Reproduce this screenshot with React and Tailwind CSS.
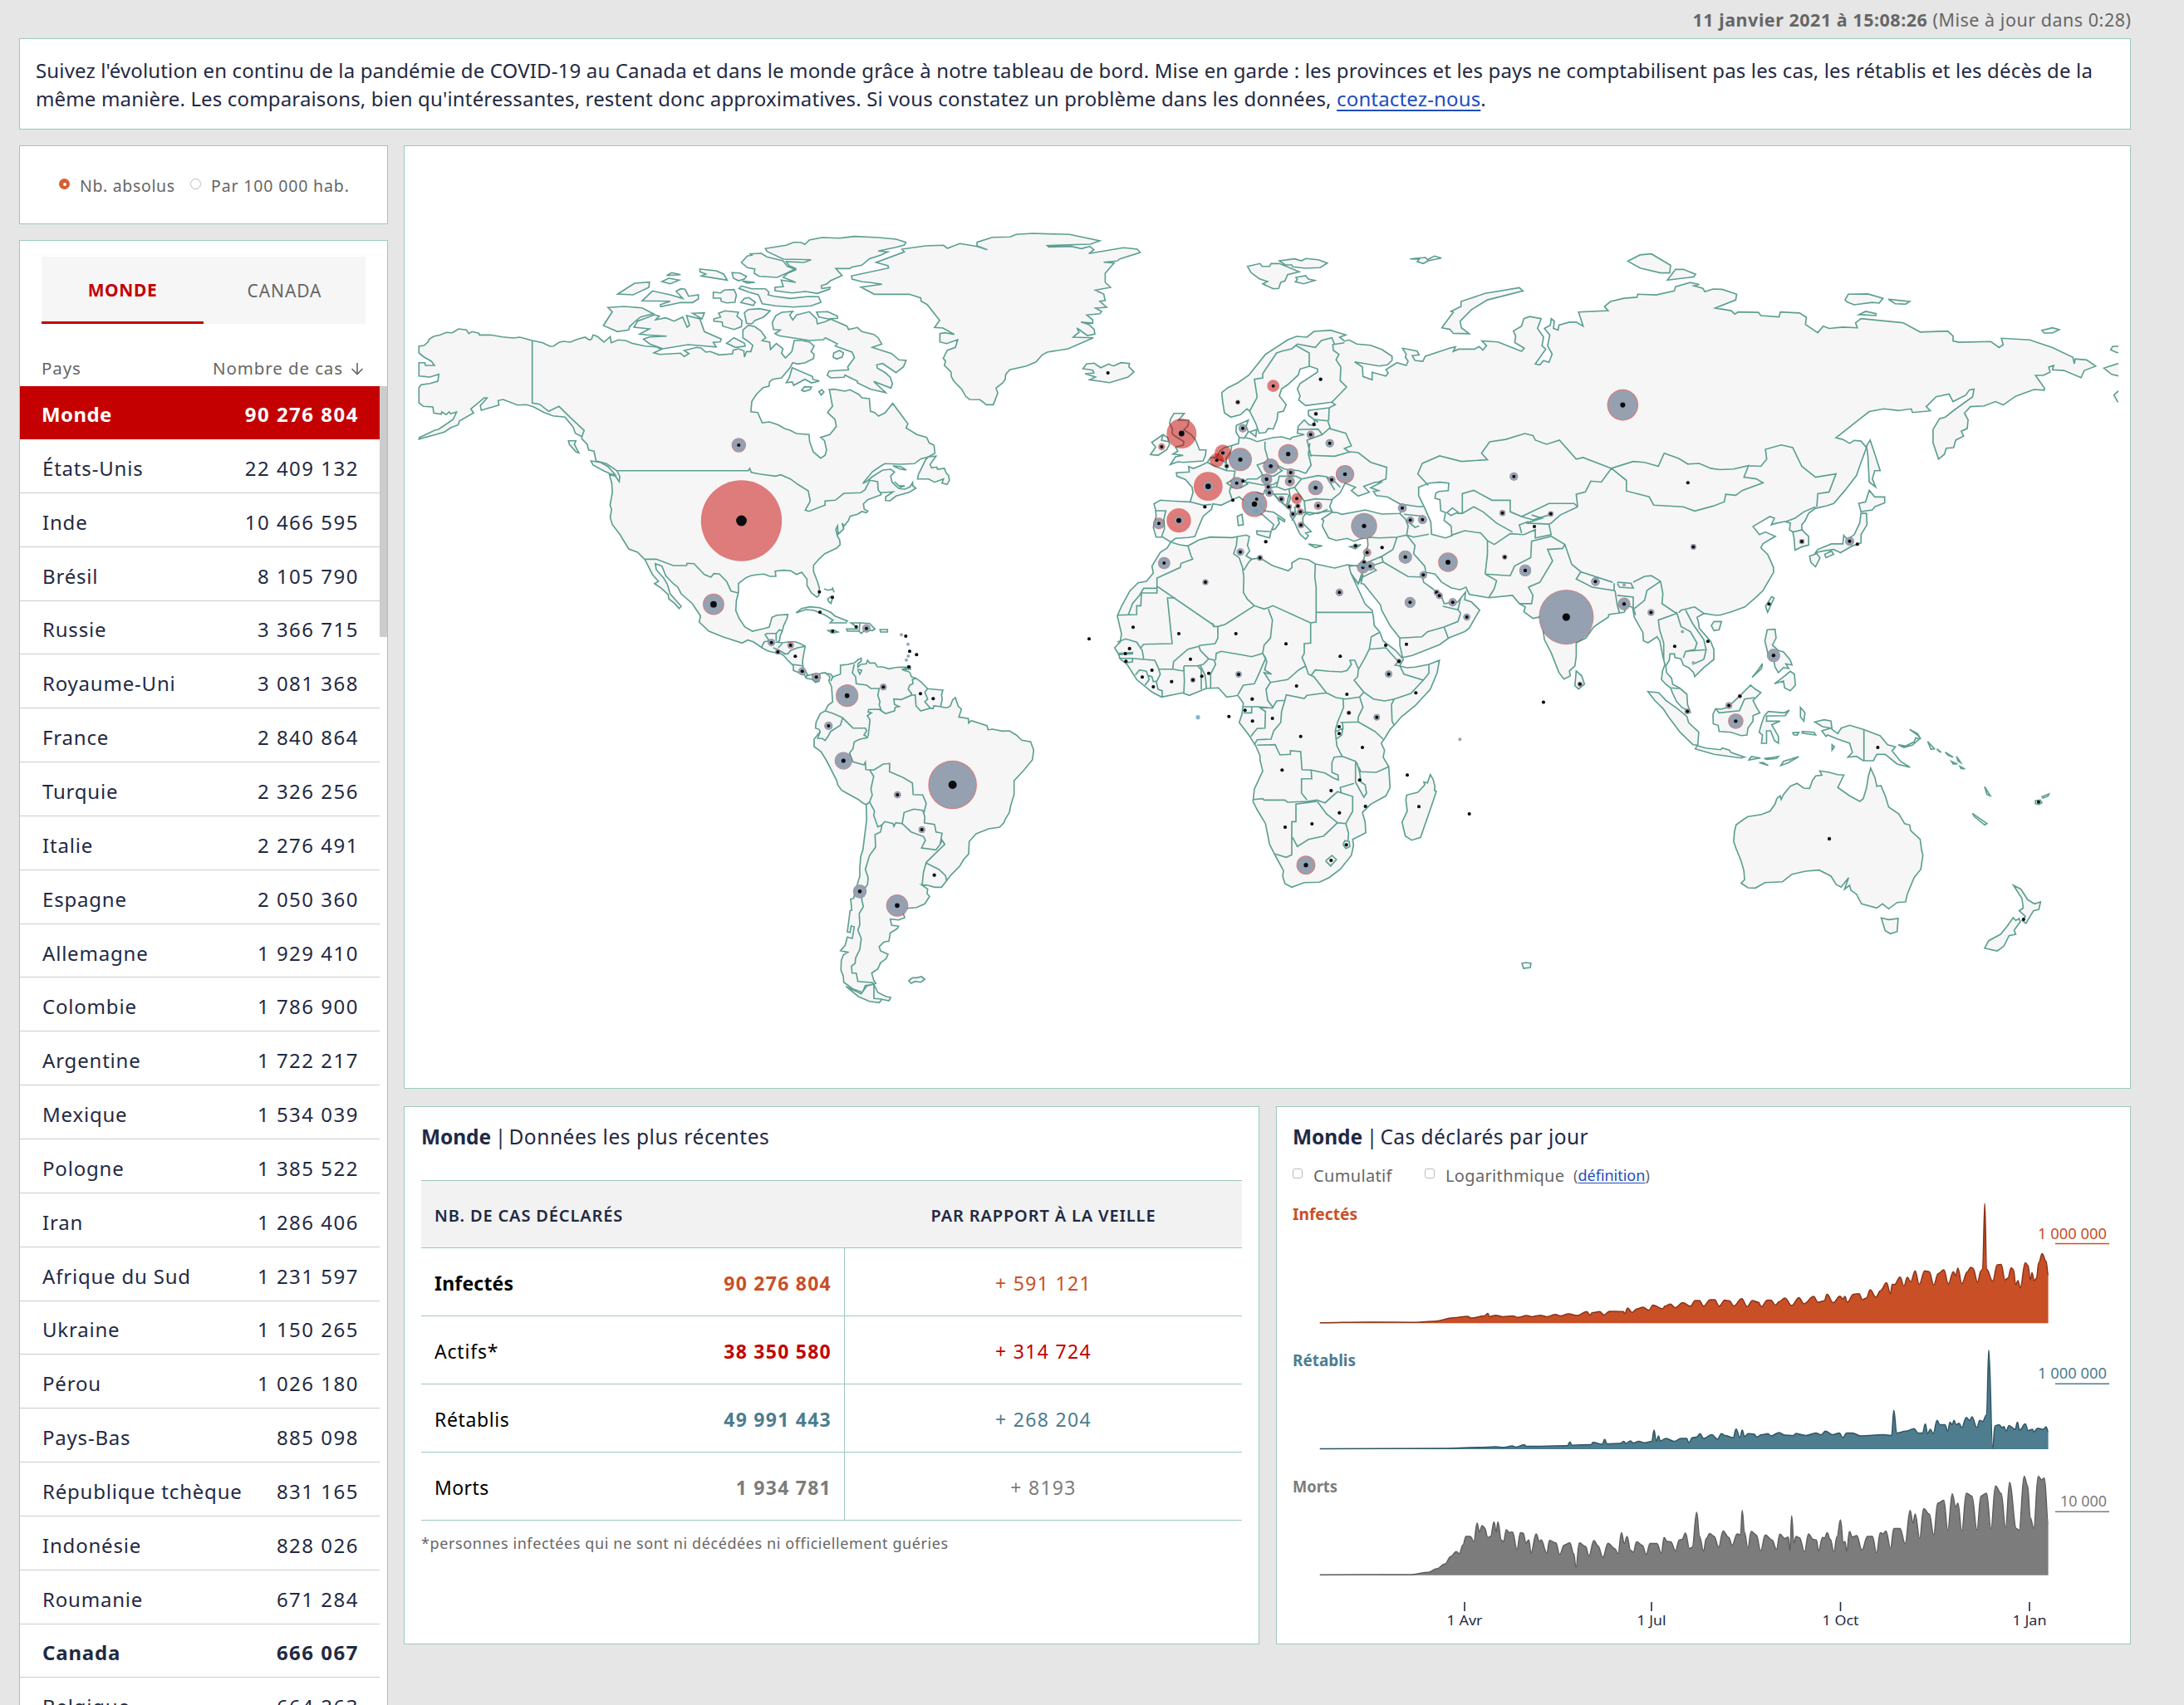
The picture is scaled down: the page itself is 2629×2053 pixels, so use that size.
import React from "react";

// Map geometry is stored in regional grids: [origin x, origin y, units per px in x, units per px in y].
const GRIDS = {
  n: [480, 260, 2.8, 3],
  g: [900, 260, 2.8, 3],
  e: [1320, 380, 3, 3],
  a: [1700, 280, 1.8233, 2.529],
  s: [900, 720, 3, 3],
  f: [1320, 640, 3, 3],
  o: [1900, 700, 2.45, 3],
  v: [1480, 290, 3, 3],
  c: [820, 700, 3, 3],
  p: [0, 0, 1, 1],
};

function project(grid, x, y) {
  const [ox, oy, sx, sy] = GRIDS[grid];
  return [ox + x / sx, oy + y / sy];
}

function toPath(source, close) {
  return source
    .split("|")
    .map((shape) => {
      let grid = "p";
      const out = [];
      shape
        .trim()
        .split(/\s+/)
        .forEach((token) => {
          if (token.length === 1) {
            grid = token;
            return;
          }
          const [x, y] = token.split(",").map(Number);
          const [px, py] = project(grid, x, y);
          out.push(px.toFixed(1) + "," + py.toFixed(1));
        });
      return "M" + out.join("L") + (close ? "Z" : "");
    })
    .join("");
}

const MAINLANDS = `
n 68,470 85,468 98,456 103,445 118,435 140,430 160,421 180,422 202,408 228,412 236,425 247,418 270,424 272,430 310,430 350,437 385,441 408,438 450,450 485,458 510,471 522,470 540,457 555,453 578,456 600,446 628,438 642,448 650,445 655,430 670,436 692,456 713,436 716,458 740,448 765,450 785,460 830,470 870,473 885,482 860,494 880,500 950,496 962,508 978,497 962,486 1005,475 1020,478 1035,492 1050,490 1080,502 1125,498 1127,485 1145,480 1163,487 1165,510 1172,490 1187,490 1193,467 1180,455 1160,440 1160,412 1178,395 1200,400 1220,415 1237,440 1225,450 1250,456 1253,482 1273,461 1295,480 1290,495 1303,513 1325,490 1333,450 1360,450 1385,456 1400,470 1390,490 1400,500 1398,515 1370,530 1345,535 1328,530 1318,550 1290,585 1260,590 1250,600 1248,615 1228,620 1205,645 1190,670 1187,707 1210,710 1225,747 1250,744 1280,755 1300,768 1320,775 1340,786 1383,790 1385,815 1397,852 1422,875 1437,865 1442,845 1435,812 1422,800 1453,790 1475,760 1470,735 1445,710 1462,688 1452,630
g 275,628 290,626 328,633 345,628 375,645 385,657 410,660 414,706 428,710 441,723 463,711 489,677 540,751 534,766 570,790 603,800 612,820 628,828 631,857 610,870 583,878 562,895 515,897 462,895 440,910 420,925 388,966 400,960 420,942 455,918 482,915 495,925 482,940 487,962 510,985 530,987 548,978 556,963 557,975 567,984 545,998 500,1012 480,1029 465,1028 465,1015 490,997 450,1000 450,1007 405,1025 390,1040 393,1060 405,1066 400,1072 385,1068 370,1078 345,1085 340,1100 325,1120 318,1110 324,1130 305,1150 303,1120 297,1132 303,1158 310,1170 312,1187 300,1200 260,1220 240,1240 222,1262 222,1285 235,1320 242,1345 240,1372 233,1377 215,1362 200,1335 200,1312 182,1287 165,1295 145,1282 120,1280 93,1283 95,1302 75,1302 55,1294 30,1296 10,1300
n 1170,1307 1145,1328 1145,1360 1138,1390
c 197,105 210,135 230,165 257,180 300,170 318,165 328,130 345,122 385,120 382,135 370,160 365,180 358,195 355,215 345,220 365,222 390,218 412,218 430,225 448,235 442,265 438,290 440,310 458,340 478,335 490,340 510,330 540,335 548,345 575,335
s 335,243 362,240 385,235 400,222 410,218 410,228 398,238 398,250 408,240 428,238 433,225 440,235 460,235 468,248 490,250 510,256 530,252 550,250 580,250 562,260 585,268 592,285 608,290 628,305 650,328 680,331 705,333 700,350 703,365 697,392 710,396 722,396 732,390 740,368 750,360 760,390 772,402 763,430 797,436 798,452 808,443 865,462 868,476 885,474 920,481 945,480 970,495 990,514 1022,520 1033,550 1028,585 995,625 962,660 962,710 950,750 945,775 930,800 925,812 910,828 870,834 825,852 800,880 798,925 780,945 765,970 735,1000 718,1022 700,1045 675,1045 650,1038 628,1036 650,1052 648,1068 657,1078 640,1105 610,1118 565,1122 562,1140 567,1155 545,1163 515,1160 520,1182 545,1186 540,1195 515,1210 510,1240 492,1243 475,1260 480,1275 507,1287 500,1303 480,1318 470,1340 448,1355 455,1380 463,1393 440,1398 425,1400 415,1425 380,1412 347,1388 345,1365 337,1345 338,1310 345,1290 362,1280 335,1274 352,1255 360,1225 378,1230 385,1188 374,1185 370,1208 360,1206 370,1130 376,1128 372,1088 383,1085 388,1062 405,1005 405,975 408,935 416,910 430,800 428,747 412,738 400,728 340,695 325,675 322,660 285,588 265,555 240,537 240,510 262,483 258,475 245,470 247,450 262,418 280,408 290,388 307,375 305,350 303,320 293,300 297,285 280,270 262,273 250,285 258,300 245,305 235,295 212,290 205,278 185,270 165,262 165,245 145,225 130,208 118,200 85,195 70,190 52,180 20,158 0,152
c 240,212 220,223 150,200 100,180 65,147 70,125 40,80 0,45
n 940,1340 925,1328 900,1300 887,1265 865,1256 868,1278 893,1308 905,1330 915,1365 935,1390 952,1410 945,1418 930,1400 910,1383 908,1368 885,1345 862,1328 875,1320 855,1295 830,1242 805,1215 775,1203 745,1150 720,1115 713,1090 717,1060 712,1045 720,1000 718,965 710,935 730,940 743,960 745,940 735,920 700,895 665,885 658,850 640,845 635,825 617,805 617,797 595,785 588,763 560,727 520,722 490,710 455,690 430,682 400,683 352,663 335,667 338,683 278,702 275,685 298,658 288,657 243,697 252,712 205,740 200,755 175,765 155,780 125,790 68,806 70,800 120,775 135,770 170,745 183,735 195,708 175,715 170,708 160,718 145,708 143,716 118,712 115,690 83,688 68,675 68,620 75,610 105,605 132,597 135,572 105,582 68,578 68,530 88,530 90,540 120,540 110,525 85,510 68,495
| e 207,680 230,667 270,670 338,673 348,640 345,620 320,592 290,580 288,568 335,565 332,545 350,552 380,540 400,530 412,512 435,510 445,490 460,478 485,470 512,462 515,440 503,420 505,397 548,377 540,400 548,420 535,440 555,445 580,455 608,448 640,440 670,438 700,447 705,440 750,430 725,425 728,400 750,377 768,395 790,395 785,375 765,360 765,343 840,333 862,322 850,313 755,325 730,305 735,290 725,265 735,245 797,205 798,193 770,183 735,193 728,215 690,250 668,265 660,290 685,322 675,345 655,350 652,375 638,410 620,408 610,422 587,425 575,390 553,345 543,337 520,358 485,367 462,352 455,310 452,278 475,260 510,243 550,215 610,140 690,88 722,75 760,78 785,57 845,53 900,70 878,78 895,92 912,88 940,103 990,107 1030,122 1067,147 1067,162 1050,178 1020,182 932,167 960,185 962,220 995,232 995,205 1045,218 1053,208 1045,195 1085,170 1118,180 1125,165 1115,150 1118,140 1105,118 1158,128 1165,142 1140,145 1150,162 1178,165 1187,147 1277,117
a 95,348 90,362 102,355 137,355 147,347 155,358 163,345 153,330 188,333 240,362 246,352 225,335 227,315 222,300 240,285 245,262 258,256 283,262 275,292 288,318 285,345 293,355 270,400 280,403 288,390 300,395 307,370 297,345 302,312 290,292 303,282 305,262 312,270 310,292 320,297 322,282 345,273 360,273 375,285 365,242 430,238 422,225 435,210 465,200 493,197 495,188 535,190 575,178 578,165 610,152 630,158 618,162 638,170 642,180 660,172 680,173 712,188 710,205 665,230 700,238 708,248 715,242 760,243 765,253 805,257 808,242 850,245 865,258 863,280 890,305 902,285 915,292 945,288 977,290 973,275 985,262 1078,275 1115,303 1175,300 1187,315 1187,330 1200,334 1270,332 1288,350 1297,342 1293,322 1355,327 1405,350 1450,380 1453,400 1455,385 1480,388 1500,407 1475,420 1468,442 1430,420 1405,418 1408,405 1397,410 1400,425 1385,435 1368,435 1388,475 1387,480 1365,478 1325,498 1297,525 1280,515 1255,528 1225,530 1212,550 1220,570 1218,597 1205,605 1210,620 1193,632 1188,655 1172,657 1168,675 1155,690 1143,640 1143,600 1157,567 1170,562 1190,540 1230,500 1233,477 1223,479 1215,495 1187,515 1178,492 1150,500 1128,530 1137,543 1098,548 1095,537 1068,542 1035,537 1003,545 930,625 945,630 960,642 970,633 985,635 997,655 985,700 975,740 950,785 925,825 910,832 885,840 870,855 862,878 855,890 855,905 870,925 870,952 855,957 840,967 838,930 835,912 828,905 830,885 818,880 800,885 788,890 795,870 785,865 748,895 762,920 775,912 797,925 770,947 765,960 780,980 793,1020 793,1035 770,1090 755,1110 730,1140 700,1155 675,1165 665,1165 640,1160 625,1172 628,1185 630,1205 655,1245 662,1270 662,1300 640,1325 620,1352
o 340,330 325,312 310,303 302,280 285,275 283,262 270,262 268,285 258,305 260,330 275,350 278,372 298,385 320,408 322,445 330,472 305,455 290,435 278,405 272,385 258,372 245,355 248,325 255,300 248,265 240,215 232,200 205,222 192,215 190,185 165,130 160,95 145,85 135,112 118,115 90,120 88,130 65,148 45,165 22,205 0,218
a 360,1250 360,1290 357,1320 345,1335 347,1350 333,1360 322,1340 305,1280 290,1240 283,1170 265,1175 245,1155 248,1140 235,1130 220,1105 168,1112 125,1102 118,1080 105,1088 85,1082 65,1065 50,1040 33,1035 22,1045 25,1065 45,1085 65,1110 70,1130 100,1125 117,1095 115,1118 130,1125 148,1150 135,1180 125,1205 115,1215 80,1235 60,1255 0,1288
e 1105,1235 1095,1190 1095,1165 1060,1120 1030,1065 1025,1045 965,970 955,968 962,935 945,970 918,930 912,905 945,902 965,880 970,860 980,830 978,800 950,808 930,815 905,805 865,812 838,803 815,760 820,740 813,735 850,710 870,712 885,718 940,708 970,702 1030,717 1095,715 1110,695 1095,680 1050,655 1010,650 1000,635 1018,632 990,622 1032,600 1005,602 965,617 985,638 945,652 920,632 935,620 898,605 880,640 852,663 842,690 850,705 835,707 800,712 770,720 755,715 745,730 745,750 775,780 755,785 765,795 755,808 735,790 725,770 712,740 700,725 700,700 690,690 660,670 640,645 608,630 603,645 580,640 578,665 605,705 640,710 680,738 678,745 655,730 660,750 645,770 632,775 640,755 600,720 560,700 540,675 515,655 490,665 450,685 420,680 415,700 385,725 370,760 355,798 330,802 285,805 268,818 240,800 215,800 205,765 215,725 213,700
| f 268,38 300,48 330,52 370,30 410,20 490,22 510,18 540,13 552,18 545,50 553,70 540,88 560,100 590,95 635,123 692,142 706,130 705,113 732,97 765,102 790,117 860,132 905,120 945,125 962,140 945,188 918,150 970,262 995,285 1000,310 1003,340 1022,362 1035,395 1080,430 1108,462 1095,485 1120,492 1150,490 1200,480 1238,465 1230,510 1205,570 1150,630 1100,670 1075,700 1060,715 1045,740 1028,765 1040,790 1035,815 1055,850 1060,925 1045,955 990,985 960,1015 970,1050 972,1088 925,1112 928,1135 920,1170 880,1220 840,1250 805,1267 750,1268 705,1285 680,1272 672,1245 675,1225 645,1170 625,1130 610,1055 580,1005 565,975 570,930 600,865 590,825 590,810 575,775 550,735 515,690 525,660 530,620 510,592 495,595 470,598 440,565 395,567 335,592 310,583 235,598 200,580 145,535 110,480 85,460 78,440 65,420 85,400 90,370 75,305 90,270 120,215 150,185 180,180 205,150 200,125 230,75 255,60
`;

const ISLANDS = `
n 648,885 680,890 705,905 730,935 715,932 690,920 655,900 | n 572,812 597,812 592,825 607,856 598,853 575,825
| n 705,331 760,327 820,332 858,353 815,365 800,378 778,400 775,412 737,418 690,396 720,346
| n 793,402 805,380 862,357 878,362 866,375 900,368 928,380 957,365 972,402 980,395 970,360 1015,372 1030,418 1087,445 1083,455 1060,457 1070,473 975,465 890,480 845,462 825,445 845,437 903,434 835,430 812,427 845,408
| n 738,282 795,243 845,239 843,258 790,285 | n 820,307 855,271 915,285 957,298 935,272 950,263 965,265 977,290 1010,285 1010,300 990,313 950,313 883,328 882,320 915,308
| n 903,215 920,205 950,212 | n 887,237 910,225 945,232 915,245 | n 1015,192 1070,198 1095,210 1107,232 1020,217 1035,210 1015,202
| n 1123,205 1150,206 1172,218 1165,228 1145,234 1128,225 | n 1158,235 1200,240 1175,243
| n 1060,275 1085,278 1097,268 1130,266 1138,285 1133,312 1105,314 1087,308 1085,297 1060,297
| n 1147,262 1155,253 1190,263 1235,263 1248,275 1245,285 1265,290 1320,298 1380,291 1415,292 1423,312 1390,325 1330,329 1270,325 1225,317 1212,285 1180,275
| n 1153,313 1165,298 1180,295 1202,312 1195,323 | n 1062,372 1085,365 1078,352 1100,343 1145,348 1140,362 1157,378 1155,400 1130,410 1092,398 1090,383 1062,380
| n 1165,350 1178,338 1215,335 1252,343 1230,365 1200,378 1190,390 1172,388 | n 990,352 1030,350 1022,372 | n 1105,460 1130,440 1165,460 1168,470 1135,475
| g 83,385 95,360 115,348 152,345 142,358 152,376 165,358 208,346 232,372 235,390 262,382 280,373 335,398 340,410 370,403 385,418 425,428 440,440 452,463 420,475 485,497 510,520 534,522 525,545 500,566 455,533 435,538 437,550 462,565 480,582 488,605 483,622 425,598 465,638 415,626 370,603 370,597 328,575 325,583 280,585 268,575 275,560 340,556 337,545 360,512 352,492 295,470 302,462 262,440 255,447 210,450 105,433 92,425 110,412 87,410
| g 290,495 310,486 323,495 318,510 300,517 288,510 | g 232,347 270,346 303,362 303,370 272,372 240,365
| g 150,548 218,580 220,590 242,596 215,603 193,590 155,612 150,600 130,602 140,585 | g 182,630 192,617 215,618 210,628 190,634 | g 240,635 250,628 257,636 248,647
| g 60,118 130,106 155,95 178,95 193,103 208,87 250,78 310,80 360,74 440,78 500,84 533,95 528,105 500,113 440,127 472,130 448,142 410,155 385,178 350,185 345,190 297,190 318,215 278,235 268,245 248,252 250,262 278,258 275,265 235,280 195,273 150,278 92,270 92,258 120,255 113,232 162,240 120,222 135,207 162,195 162,190 140,180 130,165 190,168 214,158 120,156 65,128
| n 1155,168 1175,145 1190,142 1185,137 1222,135 1240,148 1295,162 1310,182 1335,192 1305,208 1275,222 1215,218 1198,207 1200,192 1175,187
| g 575,935 600,880 610,870 635,868 615,898 620,910 637,907 640,915 663,912 670,930 677,937 680,955 672,970 655,965 660,950 630,962 610,950 573,950
| g 490,903 515,905 535,918 515,915 | g 495,960 510,975 530,975 515,980
| g 350,217 475,188 473,180 433,168 528,130 520,120 600,108 660,106 673,117 715,100 773,110 808,122 773,108 773,95 825,77 885,76 905,67 960,63 1085,67 1187,90 1155,102 1010,107 1015,112 1090,110 1125,118 1153,110 1167,122 1150,136 1200,127 1267,115 1313,120 1323,132 1255,155 1245,163 1200,167 1235,170 1205,207 1205,240 1223,258 1172,268 1200,282 1205,305 1187,308 1210,330 1173,333 1193,345 1187,353 1143,358 1163,375 1163,387 1123,383 1150,392 1168,410 1170,427 1145,432 1110,405 1117,420 1097,438 1165,440 1080,480 1010,492 993,502 972,527 940,542 883,556 870,572 868,590 860,603 837,622 843,640 828,682 805,682 783,664 748,663 735,652 722,627 695,597 687,582 685,563 663,540 667,525 659,514 673,485 700,475 708,447 670,461 648,455 648,425 665,422 697,428 658,405 630,403 647,377 605,320 585,308 583,296 545,283 427,283 382,257 453,247 410,240 385,238 352,228
| g 1130,552 1142,535 1168,532 1190,548 1217,535 1233,542 1258,530 1287,533 1285,545 1302,563 1282,582 1220,602 1153,592 1172,582 1137,570 1167,567 1163,557
| g 1425,898 1442,870 1468,865 1433,860 1450,850 1442,835 1468,828 1470,815 1440,795 1430,785 1432,770 1422,750 1425,735 1437,713 1472,713 1452,738 1487,738 1483,760 1470,772 1495,790 1510,810 1523,845 1545,845 1543,865 1535,885 1468,890 1450,888
| g 1358,862 1375,835 1362,818 1380,805 1400,790 1415,800 1422,825 1412,845 1383,865
| c 415,114 435,98 465,92 500,95 520,103 540,112 555,125 600,143 595,150 538,150 548,140 520,122 480,105 450,102
| c 530,178 548,175 566,183 545,187 | c 613,150 645,150 680,152 700,172 690,178 665,175 650,188 642,180 600,180 597,172 635,172 625,158 | c 718,174 745,174 745,183 720,183
| c 529,64 540,55 546,62 541,80 532,72 | c 797,318 828,310 828,318
| s 355,1403 410,1430 430,1402 455,1395 470,1425 500,1440 517,1443 510,1455 485,1450 475,1462 440,1457 400,1440 | s 582,1383 595,1372 610,1372 628,1368 640,1378 625,1388 605,1385 590,1392
| f 1205,878 1215,895 1222,920 1220,935 1227,938 1210,990 1170,1105 1138,1115 1115,1100 1103,1050 1122,1010 1117,970 1120,952 1160,942 1185,915 1182,905 1195,908
| o 205,398 237,402 258,430 290,458 320,488 325,510 355,545 352,592 338,590 300,545 265,488 250,460 225,430 | o 350,593 375,602 420,608 425,602 445,610 450,618 490,635 480,638 400,625 345,605
| o 503,645 510,633 537,638 | o 548,640 575,636 590,632 585,640 555,643 | o 533,655 545,655 560,665 | o 597,665 605,650 650,633 620,655
| o 405,460 420,462 440,455 475,415 508,375 520,388 538,402 525,418 515,430 525,455 535,475 515,485 515,505 500,530 497,555 480,557 450,545 415,542 412,520 398,515 397,480
| o 548,487 560,470 608,475 622,465 610,485 555,487 555,505 595,505 570,518 590,560 590,585 578,575 567,540 555,540 555,585 540,585 543,555 533,545 540,515
| o 655,455 668,475 665,505 655,490 | o 660,542 695,545 700,555 660,548 | o 632,547 650,546 645,556 635,554 | o 748,590 755,598 748,610
| o 697,508 725,500 745,505 748,535 765,550 775,530 800,520 840,535 890,558 912,590 935,598 925,612 950,650 978,672 940,660 905,625 880,625 870,648 840,648 820,632 795,635 808,618 800,585 765,570 735,555 730,560 718,540 745,530 720,525
| o 943,590 965,595 990,580 995,565 1005,570 985,592 960,600 | o 977,535 1000,550 1010,570 1000,555 | o 1030,578 1050,605 1040,607 | o 1057,605 1070,618 1062,612 | o 1082,617 1105,635 1090,628 | o 1115,632 1128,655 1120,650 | o 1100,650 1118,660 1105,660 | o 1125,668 1140,678 1128,676
| o 1198,742 1205,755 1215,775 1205,770 | o 1162,838 1205,875 1198,880 1168,850 | o 1348,792 1362,790 1367,800 1358,806 1348,803 | o 1367,778 1388,768 1385,776 1370,783
| o 557,175 580,173 583,205 572,230 590,250 605,255 625,285 630,302 612,298 620,315 605,312 590,330 580,310 577,290 560,270 555,240 550,215 | o 578,370 600,350 625,325 637,335 640,375 625,395 608,385 605,360 | o 512,347 530,320 543,297 540,315
| o 552,90 570,55 577,60 558,112 | o 392,160 400,145 422,145 415,175 400,178 | a 360,1335 372,1350 378,1375 365,1390 357,1380
| o 460,905 465,880 485,862 500,850 540,842 565,830 580,805 585,785 595,775 598,788 605,770 625,740 645,730 665,747 682,748 690,720 700,703 718,700 712,685 740,690 765,698 783,700 775,720 765,745 800,775 830,795 840,785 850,745 855,705 862,675 875,710 880,740 892,738 905,775 915,815 945,840 962,875 977,880 980,900 1008,932 1012,970 1016,990 1010,1040 990,1070 970,1130 965,1158 940,1160 915,1183 897,1165 880,1180 835,1165 820,1130 803,1115 800,1098 785,1112 797,1070 775,1105 760,1095 745,1065 710,1043 670,1047 630,1058 602,1085 550,1088 522,1108 500,1107 480,1090 490,1078 488,1045 480,1010 465,965 458,940
| o 893,1216 915,1222 943,1218 940,1265 920,1273 905,1262 | o 1283,1098 1305,1112 1325,1150 1345,1165 1363,1158 1358,1185 1342,1190 1320,1235 1308,1225 1318,1210 1300,1190 1312,1180 1308,1145
| o 1282,1215 1290,1225 1300,1218 1303,1230 1285,1260 1290,1275 1270,1280 1255,1318 1235,1335 1198,1325 1210,1298 1245,1275 1265,1245
| a 1003,785 1015,805 1037,805 1037,823 1015,835 1010,845 985,850 980,825 995,820 | a 985,855 997,855 998,890 985,920 985,945 965,955 940,975 925,965 900,970 885,975 890,965 920,948 945,948 947,922 955,935 970,920 982,885 | a 872,985 888,978 895,990 885,1018 875,1005 | a 905,980 920,970 925,980 908,990
| a 1005,632 1013,665 1027,725 1015,725 1010,750 1017,775 1003,760 1000,680 997,650
| a 70,280 90,243 85,240 107,225 107,210 160,185 235,168 243,178 165,205 130,235 105,270 108,290 125,308 90,307 83,295 65,290 | a 473,87 500,68 525,65 567,100 565,123 545,123 500,108 | a 560,145 578,112 595,112 622,127 618,135
| a 950,205 957,188 1000,187 1033,200 1025,215 1010,213 970,220 955,212 | a 1045,203 1092,210 1083,218 1060,217 | a 980,250 995,240 1018,247 1018,253 | a 1382,298 1405,290 1420,296 1405,306 1387,306
| a 1560,345 1537,347 1533,357 1545,365 1560,368 | a 1560,394 1518,413 1535,432 1560,440 | a 1560,470 1540,495 1548,515 1560,518
| v 65,92 110,82 118,92 145,92 150,82 180,82 252,112 210,122 200,145 185,150 178,172 158,173 120,155 137,147 108,137 78,115 | v 180,72 235,65 260,72 275,64 320,68 353,80 328,97 275,99 228,94 225,87 200,86 | v 240,132 275,126 285,138 308,143 268,155 238,148 245,140 | v 652,65 708,60 715,68 740,55 765,62 718,72 700,82 678,75 685,67
| e 508,725 525,718 530,755 512,758 | e 578,778 630,780 625,803 580,790 | e 765,825 815,832 790,838 | e 915,835 955,827 935,842 | e 553,420 578,412 575,437
| p 1832,1160 1837,1159 1843,1160 1842,1165 1834,1166
`;

const LAKES = `e 1163,620 1200,605 1240,602 1272,605 1270,632 1235,635 1225,642 1222,660 1240,665 1243,705 1260,712 1255,740 1280,760 1283,795 1260,803 1210,790 1207,745 1185,695 1163,650 | e 1265,712 1285,695 1305,710 1280,722 | s 400,258 412,262 405,275 398,262`;

const BORDERS = `
n 450,450 450,676 475,680 505,706 540,688 575,725 625,775 617,797
| n 735,920 1178,920 1183,912 1188,926 1215,932 1270,940 1288,935 1320,950 1345,970 1380,993 1387,1030 1370,1063 1382,1067 1437,1045 1437,1030 1472,1027 1500,1002 1557,1000 g 395,990 412,955 438,960 440,990 450,1003
| n 830,1240 868,1240 925,1263 970,1263 972,1255 995,1256 1030,1295 1052,1305 1062,1292 1080,1293 1105,1320 1120,1355 1145,1362
| c 516,27 530,32 548,28 546,22 552,40 | c 290,238 300,218 318,215 303,193 310,188 343,188 343,215 | c 343,188 355,175 365,180 | c 332,240 350,247 375,262 | c 350,240 365,225 | c 370,262 385,262 395,250 420,240 448,235 | c 403,300 438,305 | c 450,350 455,335 | c 548,345 540,360 | c 645,150 643,180
| s 385,240 378,270 390,285 392,310 430,315 445,327 475,327 470,352 478,375 475,385 483,408 | s 483,408 498,418 530,408 533,395 547,392 530,385 528,365 555,367 590,352 592,345 580,330 585,315 597,310 595,295 608,290
| s 590,352 605,350 608,390 625,408 660,398 670,400 672,390 697,392 | s 650,328 640,340 650,365 640,375 660,398 | s 483,408 475,402 437,403 435,412 447,415 432,425 442,440 435,500 | s 280,408 310,418 343,433 380,470 425,470 430,480 420,495 435,505
| s 343,433 335,460 300,482 290,500 280,515 270,508 253,507 262,483 | s 435,505 405,510 385,520 380,545 368,560 380,592 420,603 425,593 427,620 455,622 | s 440,620 455,645 445,690 450,712 440,737 428,747 | s 440,737 458,770 455,785 470,827 485,820 495,808 525,815 528,825 535,812 558,815
| s 455,622 490,600 513,598 512,628 560,648 595,668 598,710 632,712 645,742 637,775 | s 558,815 565,775 600,763 632,767 640,790 638,812 675,818 680,845 702,850 695,890 680,910 628,903 642,875 635,862 590,845 558,815 | s 695,890 702,875 712,890 645,955 635,990 630,1036 | s 645,958 690,980 715,1003 718,1022
| s 485,820 480,845 460,855 462,900 440,930 425,980 435,1010 433,1035 415,1060 412,1090 418,1115 403,1140 405,1180 398,1200 410,1230 405,1270 390,1300 388,1320 375,1330 377,1355 392,1355 398,1385 455,1390 | s 456,1395 456,1447 485,1449
| g 1400,790 1395,810 1418,815
| f 330,52 340,85 347,100 305,115 302,130 218,168 218,205 | f 425,340 218,197 218,222 162,222 160,268 145,268 145,300 75,302 | f 115,300 130,260 155,230 170,205 218,205 | f 285,240 256,240 273,405 170,407 160,420 | f 75,400 105,388 145,400 165,430 170,460 | f 80,440 130,437 130,442 80,445 | f 82,458 130,458 130,470 105,475
| f 130,458 170,462 210,465 222,490 230,515 218,540 205,542 200,525 185,520 180,505 155,500 140,518 | f 185,520 190,535 175,555 | f 215,540 222,570 237,575 237,597 | f 222,497 275,497 300,502 315,503 | f 315,487 317,540 315,585 | f 275,495 278,470 330,425 370,415 375,430 405,460 385,480 365,485 315,485
| f 365,485 378,500 378,570 | f 375,485 392,520 397,567 | f 412,565 412,515 430,480 425,465 405,460 | f 438,343 438,385 428,405 370,412 | f 418,330 422,343 438,343 465,335 570,268 605,280 620,275 | f 508,18 505,50 495,80 515,95 527,130 532,165 530,220 545,245 570,268 | f 532,140 550,110 560,100
| f 620,280 635,320 628,385 605,410 600,440 | f 620,275 637,268 773,330 773,403 750,405 750,440 742,455 755,485 | f 430,465 432,440 450,433 520,445 560,452 600,440 612,460 | f 612,455 590,505 570,550 530,555 510,590 | f 600,440 615,470 607,500 632,515 605,510 628,545 690,535 730,500 755,485 | f 628,545 612,570 618,610 637,635 650,612 680,610
| f 790,117 788,165 793,200 793,327 773,330 | f 793,292 995,292 | f 755,485 765,515 785,525 830,583 | f 775,520 790,500 840,505 885,507 905,502 920,480 915,465 932,465 945,495 | f 985,425 970,455 945,500 943,525 | f 1020,365 992,380 985,425 1045,420 1090,470 | f 1095,485 1110,515 1180,537 1135,585 1075,605 1040,612 1000,605 965,580 930,537 943,525 | f 1200,480 1200,512 1180,537 | f 1075,605 1065,625 1067,685 1075,700 | f 1090,470 1078,483 1095,485
| f 830,583 865,600 900,605 950,598 965,580 | f 680,610 685,590 750,603 760,592 830,583 | f 950,598 962,635 945,670 945,688 880,690 | f 890,605 892,635 870,690 862,720 868,775 888,815 | f 945,688 1005,722 1035,750 | f 888,690 890,710 865,722 | f 890,710 885,735 868,748 | f 1055,850 1010,870 955,868 935,830 888,812
| f 888,812 858,815 850,835 850,870 872,880 873,898 855,890 825,872 775,862 777,893 740,893 740,945 760,970 | f 580,772 645,770 662,807 700,805 700,792 737,795 742,860 775,862 | f 680,610 668,650 665,690 640,720 630,750 580,752 570,770 | f 530,633 585,633 610,650 608,710 580,712 565,730 558,740 | f 585,633 637,638 | f 530,655 560,655 560,635
| f 567,968 600,965 605,970 680,970 690,978 760,975 795,970 | f 795,975 720,985 720,1048 705,1048 705,1168 685,1177 645,1165 | f 797,975 830,1020 870,1052 | f 795,970 825,980 870,940 925,957 925,1010 900,1055 870,1052 820,1100 765,1112 725,1138 708,1105 | f 930,910 880,925 883,942 | f 935,835 935,905 965,960 975,945 970,915 955,905 950,870 940,835 | f 900,1055 910,1090 908,1115
| f 890,1130 897,1117 912,1120 915,1138 900,1145 890,1130 | f 827,1190 850,1170 866,1185 845,1208 827,1190
| e 213,705 250,705 243,735 245,770 235,798 | e 338,673 385,685 415,682 | e 400,530 430,545 470,560 500,562 495,590 470,605 485,615 480,635 490,665 | e 412,512 445,520 465,530 470,545 | e 488,468 485,490 468,515 470,560 | e 470,605 500,590 530,592 545,608 520,622 485,620 | e 515,440 535,443
| e 608,455 608,480 622,530 | e 622,525 580,540 600,575 640,580 670,560 645,540 | e 622,525 680,555 730,560 755,570 | e 755,570 775,540 765,500 770,460 | e 600,575 580,590 545,590 535,600 600,612 640,610 655,600 660,580 720,580 740,590 | e 655,600 650,618 680,630 715,620 740,590 800,578 830,582 860,630 | e 715,620 735,650 750,670 790,662 850,665 | e 750,670 755,715
| e 610,625 650,618 | e 620,645 690,645 | e 640,645 685,690 695,645 | e 695,628 700,660 690,690 | e 705,720 755,710 800,715 835,700 | e 715,690 720,720 705,740 | e 830,582 860,600 880,620 | e 770,505 860,508 915,492 945,495 990,530 1048,548 1045,590 1020,600 | e 775,510 760,450 815,430 840,408 900,425 920,470 895,480 915,495 | e 728,412 800,410 815,430
| e 800,385 785,375 835,380 845,410 | e 840,333 838,380 | e 895,98 853,105 855,125 875,140 865,160 882,185 880,235 903,258 850,313 | e 860,105 850,80 812,90 790,115 725,103 | e 720,108 768,135 768,183 | e 725,103 705,120 670,128 650,135 600,210 600,225 570,230 580,295 553,345
| e 978,800 1020,803 1085,800 1120,793 1125,760 1115,735 1095,715 | e 1095,680 1160,690 1180,690 | e 1110,718 1185,725 | e 1120,740 1150,765 1165,760 | e 1120,793 1150,830 1145,860 1185,905 1190,935 | e 1085,800 1070,845 1030,870 | e 970,895 1030,870 1035,890 990,905 1010,920 960,945 | e 1035,890 1125,943 1190,945 | e 1095,1165 1175,1160 1195,1142 1255,1125 1305,1105 1315,1075 | e 1255,1125 1270,1165 | e 1250,1050 1305,1063 1315,1020 | e 1315,1075 1305,1063 | e 1120,793 1145,800 1200,790
| a 35,770 12,735 22,703 60,680 108,697 165,692 152,672 170,637 205,630 247,612 265,618 270,632 295,645 323,632 360,690 375,685 437,718 | a 437,718 415,760 392,757 380,790 360,797 363,835 | a 363,835 355,825 300,825 240,865 215,850 215,815 175,815 135,785 110,795 110,855 | a 98,855 110,855 135,835 155,850 185,885 220,912 | a 85,922 115,908 150,915 165,938 180,950 215,917 245,920
| a 240,865 265,875 300,860 | a 262,860 285,870 250,885 300,888 305,885 325,860 363,835 | a 240,915 235,890 255,880 | a 300,888 305,920 270,930 270,905 245,920 | a 165,938 165,980 160,1040 | a 160,1040 185,1060 180,1085 168,1112 | a 160,1040 215,1045 225,1015 260,990 262,940 305,925 | a 335,950 330,962 297,965 308,1000 280,1065 255,1080 265,1105 262,1130 235,1130
| a 305,925 335,950 350,1010 370,1033 440,1065 | a 370,1033 360,1055 395,1080 443,1090 443,1068 | a 450,1068 455,1080 485,1083 480,1068 450,1065 | a 485,1065 510,1047 525,1045 545,1062 | a 445,1090 450,1135 455,1158 | a 450,1105 485,1110 485,1140 490,1165 | a 545,1062 515,1090 510,1120 488,1145 | a 545,1062 550,1100 548,1130 580,1160 | a 580,1160 540,1180 543,1210 552,1250 552,1300
| a 580,1155 590,1200 610,1215 625,1250 620,1270 600,1275 | a 585,1158 590,1150 620,1140 640,1160 | a 600,1150 615,1190 640,1240 645,1270 600,1275 595,1295 | a 645,1270 640,1300 615,1315 | a 437,718 485,697 510,700 540,712 553,672 585,688 605,705 630,703 655,718 675,722 705,720 738,710 728,745 755,750 770,762 725,785 710,800 688,797 685,820 660,833 620,848 595,835 530,830 520,805 470,787 470,755 437,718
| a 738,710 765,712 778,690 775,660 810,647 835,655 855,712 885,745 930,735 915,790 890,795 888,835 | a 885,835 860,850 840,870 820,880 | a 835,912 858,905 | o 275,385 298,388 | o 405,460 415,475 475,467 490,425 520,420 | o 842,537 842,648
`;

// grid, x, y, outer radius, inner radius, dot radius
const MARKERS = `
n 1155,1101 48.7 0 6.4|n 1146,828 8.7 8.2 2.1|n 1061,1403 12.9 12 3.9|s 740,675 29.3 28.2 5|a 338,1171 33.1 32.4 4.6|a 462,525 18.8 17.6 3.1
|e 307,426 18 3.6 3.4|e 403,617 17.4 6 3.3|e 297,740 14.7 5 3|e 225,751 7 6.2 2|e 235,474 4.2 2.7 2|e 456,496 10 2.5 2.2|e 434,523 8.5 2.2 2|e 470,544 0 3 2|e 519,520 14 13.2 2.6|e 692,500 12 11 2.6|e 629,544 9.4 8.6 2.4|e 528,407 5 4.8 2|e 510,313 2.9 2.5 2|e 638,254 7.3 2 2|e 809,230 0 2.4 2|e 792,355 0 2.6 2|e 785,393 0 2.6 2|e 773,430 4.8 4.2 2|e 842,461 5 5 2|e 897,573 11.1 10 2.3|e 849,593 4.5 4.5 2|e 791,622 9 8.5 2.3|e 698,599 6 5.2 2|e 701,567 5 4.6 2|e 614,591 6.8 6.5 2.2|e 506,605 7.5 6.8 2|e 529,598 0 2.2 2|e 492,667 0 2 2|e 391,691 0 2.2 2|e 570,681 15.4 14.1 3.2|e 578,663 0 2 2|e 620,619 4 4 2|e 624,640 5 5 2|e 667,663 4 4 2|e 723,661 6.5 2 2|e 695,691 3.3 3.3 2|e 727,688 3.2 3 2|e 709,717 3.5 3.5 2|e 736,709 4.2 3.6 2|e 800,687 5 4.4 2|e 738,757 4 3.6 2|e 966,760 15.7 15.1 2.6|e 1104,695 5.3 5.3 2|e 1133,739 4.5 4.5 2|e 1177,737 5.3 5.3 2|e 1269,891 11.8 11 3|e 1115,872 8 8 2.2|e 1031,838 0 2.3 2|e 977,856 5 4.2 2|e 962,910 7.3 6.7 2|e 966,891 3 3 2|e 988,905 5.5 5.5 2|e 1180,937 4.5 4.5 2|e 1228,1000 3.5 3.5 2|e 1238,1012 4 4 2|e 1286,1036 5 5 2|e 1132,1036 6.5 6.5 2|e 1337,1089 4.2 4.2 2|e 1119,1187 0 2 2|e 935,832 2.8 2.8 2|e 611,817 0 2.3 2|e 519,854 4.5 4.5 2|e 590,875 3.5 3.5 2|e 244,894 7.3 7.3 2|e 393,963 3.5 3.5 2|e 877,1000 4.5 4.5 2|e 41,207 0 2 2
|f 132,346 0 2 2|f 297,369 0 2 2|f 503,369 0 2 2|f 684,406 0 2 2|f 880,451 0 2 2|f 119,423 0 2.3 2|f 104,441 0 2 2|f 106,469 0 2 2|f 165,526 0 2 2|f 200,501 0 2 2|f 205,561 0 2 2|f 271,542 0 2.2 2|f 380,523 0 2 2|f 405,512 0 2 2|f 339,461 0 2 2|f 562,605 0 2.4 2|f 536,646 0 2 2|f 563,685 0 2 2|f 635,675 0 2 2|f 478,668 0 2 2|f 722,558 0 2 2|f 904,588 0 2 2|f 737,740 0 2 2|f 960,780 0 2 2|f 1044,411 0 2 2|f 1153,583 0 2 2|f 876,705 0 2 2|f 876,730 0 2 2|f 911,655 2.6 2.6 2|f 670,862 0 2 2|f 950,898 0 2 2|f 847,936 0 2.3 2|f 971,993 0 2.2 2|f 877,1016 0 2.2 2|f 778,1056 0 2 2|f 681,1068 0 2.3 2|f 902,1132 0 2.3 2|f 847,1188 0 2.2 2|f 1164,994 0 2 2|f 1122,880 0 2 2|f 1346,1020 0 2 2|f 348,536 3 3 2|f 513,516 3.7 3.7 2|f 1055,515 4.4 4.4 2|f 1012,671 3.8 3.8 2|f 1092,469 3 3 2|f 756,1205 11.4 10.5 2.6
|a 223,743 5 5 2|a 605,762 0 2 2|a 198,854 3.6 3.6 2|a 304,857 3.4 3.4 2|a 268,895 0 2 2|a 617,957 3.4 3.4 2|a 203,988 3 3 2|a 248,1029 7.2 7.2 2.2|a 402,1063 5.2 5.2 2|a 465,1131 7.6 7.3 2.2|a 524,1157 4 4 2|a 576,1260 0 2 2|a 649,1245 0 2 2|a 368,1375 3 3 2|a 288,1430 0 2 2|a 604,1458 3.5 3.5 2|a 719,1412 2.5 2.5 2|a 695,1440 4 4 2|a 710,1488 9.3 8.7 2.2|a 793,1288 8 8 2.2|a 783,1131 0 2 2|a 855,941 3.2 3.2 2|a 960,940 5.3 5.3 2|a 977,949 0 2 2
|o 883,600 0 2 2|o 740,930 0 2.4 2|o 1357,797 0 2 2|o 1313,1221 0 2 2
|s 490,322 4 4 2|s 359,353 13.6 12.9 2.8|s 624,346 0 2 2|s 670,364 0 2 2|s 292,462 5 5 2|s 346,588 10.6 10.3 2.6|s 541,711 4.3 4.3 2|s 629,837 4 4 2|s 674,1001 0 2.4 2|s 405,1060 8.2 8.2 2.3|s 540,1111 13.3 12.6 2.8|s 1233,148 0 2 2
|c 326,221 4.5 4.5 2|c 349,255 3.2 3.2 2|c 395,231 4 3.3 2|c 412,271 0 2 2|c 437,325 4.8 4.8 2|c 488,346 5.7 5.3 2|c 632,164 0 2 2|c 669,170 5 5 2|c 547,180 0 2.2 2|c 501,112 0 2 2|c 546,58 0 2 2|c 499,38 0 2 2|c 811,198 0 2 2|c 825,253 0 2 2|c 850,265 0 2 2|c 822,309 0 2.3 2
`
  .split("|")
  .map((m) => {
    const [grid, xy, outer, inner, dot] = m.trim().split(" ");
    const [x, y] = xy.split(",").map(Number);
    const [cx, cy] = project(grid, x, y);
    return { cx, cy, outer: +outer, inner: +inner, dot: +dot };
  });

const FAINT = [
  ["c", 795, 193], ["c", 819, 227], ["c", 820, 270], ["c", 813, 284], ["f", 1312, 751],
  ["a", 465, 1073], ["a", 593, 1215], ["a", 617, 1310], ["o", 628, 645],
];
const BLUE = [["f", 366, 671], ["e", 578, 705], ["e", 966, 902]];

function WorldMap() {
  return (
    <svg className="block h-full w-full" viewBox="487 176 2077 1134" preserveAspectRatio="none">
      <clipPath id="frame">
        <rect x="503" y="176" width="2047" height="1134" />
      </clipPath>
      <g clipPath="url(#frame)" stroke="#5b9f90" strokeWidth="1.65" strokeLinejoin="miter">
        <path d={toPath(MAINLANDS, true)} fill="#f6f6f6" />
        <path d={toPath(ISLANDS, true)} fill="#f6f6f6" />
        <path d={toPath(LAKES, true)} fill="#fff" />
        <path d={toPath(BORDERS, false)} fill="none" />
      </g>
      {MARKERS.map((m, i) => (
        <g key={i}>
          {m.outer > 0 && <circle cx={m.cx} cy={m.cy} r={m.outer} fill="#c60000" fillOpacity="0.5" />}
          {m.inner > 0 && <circle cx={m.cx} cy={m.cy} r={m.inner} fill="#8fa4b5" fillOpacity="0.93" />}
          <circle cx={m.cx} cy={m.cy} r={m.dot} fill="#0c0c0e" />
        </g>
      ))}
      {FAINT.map(([g, x, y], i) => {
        const [cx, cy] = project(g, x, y);
        return <circle key={i} cx={cx} cy={cy} r="2" fill="#93a8b8" />;
      })}
      {BLUE.map(([g, x, y], i) => {
        const [cx, cy] = project(g, x, y);
        return <circle key={i} cx={cx} cy={cy} r="2.6" fill="#62a5c4" fillOpacity="0.8" />;
      })}
    </svg>
  );
}

const COUNTRIES = [
  ["États-Unis", "22 409 132"], ["Inde", "10 466 595"], ["Brésil", "8 105 790"], ["Russie", "3 366 715"],
  ["Royaume-Uni", "3 081 368"], ["France", "2 840 864"], ["Turquie", "2 326 256"], ["Italie", "2 276 491"],
  ["Espagne", "2 050 360"], ["Allemagne", "1 929 410"], ["Colombie", "1 786 900"], ["Argentine", "1 722 217"],
  ["Mexique", "1 534 039"], ["Pologne", "1 385 522"], ["Iran", "1 286 406"], ["Afrique du Sud", "1 231 597"],
  ["Ukraine", "1 150 265"], ["Pérou", "1 026 180"], ["Pays-Bas", "885 098"], ["République tchèque", "831 165"],
  ["Indonésie", "828 026"], ["Roumanie", "671 284"], ["Canada", "666 067"], ["Belgique", "664 263"],
];

const ROWS = [
  ["Infectés", "90 276 804", "+ 591 121", "text-[#c94f26]", "font-bold tracking-[0.2px]"],
  ["Actifs*", "38 350 580", "+ 314 724", "text-[#c40000]", "tracking-[0.8px]"],
  ["Rétablis", "49 991 443", "+ 268 204", "text-[#4d7d8f]", "tracking-[0.6px]"],
  ["Morts", "1 934 781", "+ 8193", "text-[#7c7c7c]", "tracking-[0.4px]"],
];

const SERIES = [
  {
    name: "Infectés", labelY: 1469, scale: "1 000 000", scaleY: 1492, lineY: 1497.5, base: 630, nameWidth: 78, scaleWidth: 83,
    fill: "#c94f26", edge: "#8a3318",
    d: "87,629 170,627 250,628 290,625 325,615 350,611 357,616 380,610 386,603 389,612 400,608 412,612 430,610 440,614 455,609 465,612 480,608 490,612 507,606 515,610 530,604 545,609 562,598 568,607 572,601 585,598 593,607 603,597 627,598 630,603 635,588 643,600 652,590 662,586 673,594 680,580 697,590 702,582 711,577 720,587 733,573 747,583 755,567 763,567 770,583 782,565 790,565 798,583 808,566 816,568 824,582 838,562 848,584 857,567 868,572 873,584 884,566 890,566 898,580 905,570 915,560 927,581 940,559 949,576 966,556 974,572 985,568 990,550 1001,573 1013,555 1018,563 1022,556 1026,572 1037,550 1047,548 1053,565 1060,560 1067,537 1077,558 1085,540 1096,518 1103,548 1106,522 1110,523 1120,502 1127,527 1133,503 1139,515 1147,485 1154,522 1164,485 1172,487 1180,524 1188,492 1198,482 1206,521 1215,487 1219,498 1223,477 1230,520 1240,487 1246,475 1250,478 1258,516 1264,485 1267,480 1271,298 1274,480 1285,513 1293,468 1300,467 1307,510 1312,505 1318,476 1322,482 1326,523 1330,512 1334,532 1343,462 1348,470 1352,510 1355,490 1359,512 1363,505 1367,462 1373,437 1380,458 1384,497",
  },
  {
    name: "Rétablis", labelY: 1645, scale: "1 000 000", scaleY: 1660, lineY: 1666.3, base: 980, nameWidth: 76, scaleWidth: 83,
    fill: "#4d7d8f", edge: "#2f5563",
    d: "87,979 300,978 370,975 400,973 415,975 430,971 435,974 451,968 455,972 480,972 528,970 532,960 536,969 570,967 573,961 590,966 594,952 598,965 622,964 628,958 632,964 640,957 645,963 655,958 665,962 678,958 682,927 686,958 690,943 693,957 703,950 718,958 730,950 740,950 744,962 750,948 758,946 764,937 770,950 785,940 795,952 802,937 808,942 823,948 828,924 835,948 839,927 843,945 850,937 860,938 865,946 873,940 885,937 890,943 905,934 915,941 930,942 935,936 945,940 952,942 970,935 980,940 987,930 1000,940 1012,935 1018,948 1025,935 1035,935 1050,943 1090,940 1105,942 1109,872 1114,935 1130,930 1145,923 1152,935 1160,935 1165,910 1169,937 1174,925 1179,937 1186,900 1191,912 1200,912 1205,930 1209,905 1213,912 1216,900 1220,912 1225,908 1230,920 1238,892 1244,900 1248,890 1257,920 1262,900 1267,903 1274,885 1278,705 1285,978 1289,915 1296,912 1302,920 1305,917 1309,930 1314,914 1325,925 1329,905 1333,927 1343,910 1348,928 1356,925 1358,932 1365,922 1375,925 1380,918 1384,932",
  },
  {
    name: "Morts", labelY: 1797, scale: "10 000", scaleY: 1814, lineY: 1820.3, base: 1330, nameWidth: 54, scaleWidth: 56,
    fill: "#7c7c7c", edge: "#5e5e5e",
    d: "87,1329 250,1328 280,1322 295,1312 310,1298 320,1278 330,1264 335,1270 342,1245 347,1222 355,1222 361,1237 367,1185 371,1210 376,1192 380,1198 386,1225 391,1222 397,1182 401,1210 404,1182 410,1232 414,1237 419,1204 424,1211 430,1210 438,1258 444,1212 449,1213 454,1240 459,1232 463,1268 472,1215 478,1236 481,1232 491,1268 496,1233 507,1240 514,1272 522,1246 532,1240 539,1270 543,1308 549,1240 560,1250 566,1276 575,1234 582,1248 591,1280 600,1241 612,1256 618,1270 624,1212 629,1242 634,1222 640,1260 645,1266 651,1237 661,1247 668,1272 675,1242 687,1242 695,1268 700,1225 705,1236 712,1237 720,1262 727,1232 732,1230 738,1213 745,1256 750,1252 758,1155 763,1222 770,1263 775,1228 781,1214 789,1222 797,1252 805,1207 815,1225 821,1247 830,1215 836,1218 839,1150 843,1210 849,1255 855,1208 864,1218 872,1262 880,1218 892,1232 900,1258 906,1216 915,1228 921,1224 924,1262 927,1165 931,1240 935,1222 941,1226 950,1265 957,1215 965,1230 971,1232 975,1262 982,1225 986,1226 990,1212 996,1230 1002,1265 1008,1222 1014,1176 1019,1240 1022,1236 1025,1263 1030,1208 1035,1224 1043,1220 1052,1260 1062,1222 1071,1222 1078,1268 1085,1212 1090,1215 1095,1207 1103,1255 1109,1200 1120,1200 1129,1242 1138,1150 1143,1185 1147,1160 1155,1228 1162,1145 1172,1160 1180,1218 1187,1130 1198,1122 1205,1205 1213,1104 1219,1140 1223,1130 1230,1207 1238,1102 1248,1110 1257,1204 1264,1110 1274,1102 1282,1200 1290,1082 1300,1103 1308,1198 1315,1072 1327,1200 1332,1205 1341,1055 1347,1080 1352,1170 1358,1200 1366,1055 1372,1065 1377,1060 1384,1185",
  },
];

const TICKS = [["1 Avr", 1763, 43], ["1 Jul", 1988, 35], ["1 Oct", 2215.5, 44], ["1 Jan", 2443, 41]];

function Charts() {
  const x = (v) => 1530 + v / 1.4792;
  const y = (v) => 1320 + v / 2.3059;
  return (
    <svg className="block h-[530px] w-[984px]" viewBox="1556 1437 984 530">
      {SERIES.map((s) => {
        const points = s.d.split(" ").map((p) => {
          const [a, b] = p.split(",").map(Number);
          return [x(a), y(b)];
        });
        // Cubic segments with flat tangents give the rounded weekly waves.
        let line = "M" + points[0].map((v) => v.toFixed(1)).join(",");
        for (let i = 1; i < points.length; i++) {
          const [x0, y0] = points[i - 1];
          const [x1, y1] = points[i];
          const k = (x1 - x0) * 0.4;
          line += `C${(x0 + k).toFixed(1)},${y0.toFixed(1)} ${(x1 - k).toFixed(1)},${y1.toFixed(1)} ${x1.toFixed(1)},${y1.toFixed(1)}`;
        }
        const base = y(s.base).toFixed(1);
        return (
          <g key={s.name}>
            <path d={`${line}V${base}H${x(87).toFixed(1)}Z`} fill={s.fill} />
            <path d={line} fill="none" stroke={s.edge} strokeWidth="1.5" />
            <path d={`M2474,${s.lineY}H2539`} stroke={s.fill} strokeWidth="1.4" />
            <text x="1556" y={s.labelY} fontSize="19.5" fontWeight="700" fill={s.fill} textLength={s.nameWidth} lengthAdjust="spacingAndGlyphs">
              {s.name}
            </text>
            <text x="2536" y={s.scaleY} textAnchor="end" fontSize="17.5" fill={s.fill} textLength={s.scaleWidth} lengthAdjust="spacingAndGlyphs">
              {s.scale}
            </text>
          </g>
        );
      })}
      {TICKS.map(([label, tx, width]) => (
        <g key={label}>
          <path d={`M${tx},1929V1940`} stroke="#1f2a44" strokeWidth="1.6" />
          <text x={tx} y="1957" textAnchor="middle" fontSize="17" fill="#1f2a44" textLength={width} lengthAdjust="spacingAndGlyphs">
            {label}
          </text>
        </g>
      ))}
    </svg>
  );
}

export default function App() {
  return (
    <div className="h-[2053px] w-full overflow-hidden bg-[#e6e6e6] pl-[23px] pr-[64px] font-['Noto_Sans','Open_Sans',sans-serif] text-[#1f2a44]">
      <div className="flex h-[47px] items-center justify-end text-[21.5px] leading-none tracking-[0.52px] text-[#666]">
        <span className="mr-[-0.5px] whitespace-pre">
          <b>11 janvier 2021 à 15:08:26</b> (Mise à jour dans 0:28)
        </span>
      </div>

      <div className="mt-[-1px] flex h-[110px] flex-col justify-center whitespace-nowrap border border-[#9bc9bb] bg-white pl-[19px] pt-[2px] text-[24px] leading-[34.5px] tracking-[0.15px]">
        <p>
          Suivez l'évolution en continu de la pandémie de COVID-19 au Canada et dans le monde grâce à notre tableau de bord. Mise en garde : les provinces et les pays ne comptabilisent pas les cas, les rétablis et les décès de la
        </p>
        <p>
          <span>même manière. Les comparaisons, bien qu'intéressantes, restent donc approximatives. Si vous constatez un problème dans les données, </span>
          <a className="text-[#1d4dbf] underline decoration-[1.5px] underline-offset-4">contactez-nous</a>.
        </p>
      </div>

      <div className="mt-[19px] flex gap-[19px]">
        <aside className="w-[444px] shrink-0">
          <div className="flex h-[95px] items-center border border-[#9bc9bb] bg-white pl-[47px] pt-[2px] text-[19.5px] tracking-[0.65px] text-[#666]">
            <span className="mb-[4px] mr-[12px] flex h-[13px] w-[13px] items-center justify-center rounded-full bg-[#d4602f]">
              <span className="h-[4px] w-[4px] rounded-full bg-white" />
            </span>
            <span className="w-[116px] whitespace-nowrap">Nb. absolus</span>
            <span className="mb-[4px] ml-[17px] mr-[12px] h-[13px] w-[13px] rounded-full border border-[#bbb] bg-white" />
            <span className="whitespace-nowrap tracking-[0.85px]">Par 100 000 hab.</span>
          </div>

          <div className="mt-[19px] h-[1800px] border border-[#9bc9bb] bg-white">
            <div className="mx-[26px] mt-[19px] flex h-[81px] bg-[#f6f6f6] text-[21px]">
              <div className="flex w-[195px] items-center justify-center border-b-[3px] border-[#c40000] pt-[3px] font-bold tracking-[0.6px] text-[#c40000]">MONDE</div>
              <div className="flex flex-1 items-center justify-center pt-[3px] tracking-[0.9px] text-[#666]">CANADA</div>
            </div>
            <div className="flex h-[75px] items-end justify-between pb-[6px] pl-[26px] pr-[28px] text-[20.5px] tracking-[0.9px] text-[#666]">
              <span>Pays</span>
              <span className="flex items-center gap-[9px]">
                Nombre de cas
                <svg className="h-[16px] w-[16px]" viewBox="0 0 16 16" fill="none" stroke="#666" strokeWidth="1.6">
                  <path d="M8 1V14.5M1.5 8L8 14.5L14.5 8" />
                </svg>
              </span>
            </div>
            <div className="flex">
              <div className="w-[433px] text-[24px]">
                <div className="flex h-[64px] items-center justify-between bg-[#c40000] pl-[26px] pr-[25px] pt-[4px] font-bold text-white">
                  <span className="tracking-[0.4px]">Monde</span>
                  <span className="tracking-[1.5px]">90 276 804</span>
                </div>
                {COUNTRIES.map(([name, cases]) => (
                  <div
                    key={name}
                    className={
                      "flex h-[64.85px] items-center justify-between border-b border-[#ccc] pl-[27px] pr-[25px] pt-[6px] " +
                      (name === "Canada" ? "font-bold" : "")
                    }
                  >
                    <span className="tracking-[0.8px]">{name}</span>
                    <span className="tracking-[1.5px]">{cases}</span>
                  </div>
                ))}
              </div>
              <div className="h-[302px] flex-1 bg-[#ccc]" />
            </div>
          </div>
        </aside>

        <main className="flex-1">
          <div className="h-[1136px] border border-[#9bc9bb] bg-white">
            <WorldMap />
          </div>

          <div className="mt-[21px] flex gap-[20px]">
            <section className="h-[648px] w-[1030px] border border-[#9bc9bb] bg-white px-[20px]">
              <h2 className="mt-[18px] whitespace-pre text-[24.5px] leading-[36px] tracking-[0.55px]">
                <b className="tracking-[-0.1px]">Monde</b>
                <span className="tracking-[-1.6px]"> | </span>Données les plus récentes
              </h2>
              <div className="mt-[34px] border-t border-[#9bc9bb]">
                <div className="flex h-[81px] items-center border-b border-[#9bc9bb] bg-[#f2f2f2] pt-[3px] text-[20px] font-semibold tracking-[0.85px]">
                  <span className="w-[510px] pl-[16px]">NB. DE CAS DÉCLARÉS</span>
                  <span className="flex-1 text-center">PAR RAPPORT À LA VEILLE</span>
                </div>
                {ROWS.map(([name, total, delta, color, style]) => (
                  <div key={name} className="flex h-[82px] border-b border-[#9bc9bb] text-[23px]">
                    <div className="flex w-[510px] items-center justify-between border-r border-[#9bc9bb] pl-[16px] pr-[15px] pt-[3px]">
                      <span className={"text-black " + style}>{name}</span>
                      <span className={"font-bold tracking-[1.25px] " + color}>{total}</span>
                    </div>
                    <div className={"flex flex-1 items-center justify-center pt-[3px] tracking-[1.3px] " + color}>{delta}</div>
                  </div>
                ))}
              </div>
              <p className="mt-[13px] text-[18px] leading-[28px] tracking-[0.6px] text-[#666]">
                *personnes infectées qui ne sont ni décédées ni officiellement guéries
              </p>
            </section>

            <section className="h-[648px] w-[1029px] border border-[#9bc9bb] bg-white pl-[19px]">
              <h2 className="mt-[18px] whitespace-pre text-[24.5px] leading-[36px] tracking-[0.45px]">
                <b className="tracking-[-0.1px]">Monde</b>
                <span className="tracking-[-1.6px]"> | </span>Cas déclarés par jour
              </h2>
              <div className="mt-[11px] flex h-[39px] items-center pb-[4px] text-[20px] tracking-[0.35px] text-[#666]">
                <span className="mb-[5px] mr-[13px] h-[12px] w-[12px] rounded-[3px] border border-[#bbb] bg-white" />
                <span className="w-[98px]">Cumulatif</span>
                <span className="mb-[5px] ml-[36px] mr-[13px] h-[12px] w-[12px] rounded-[3px] border border-[#bbb] bg-white" />
                <span className="w-[154px]">Logarithmique</span>
                <span className="text-[18px] tracking-normal">
                  (<a className="text-[#1d4dbf] underline underline-offset-2">définition</a>)
                </span>
              </div>
              <Charts />
            </section>
          </div>
        </main>
      </div>
    </div>
  );
}
